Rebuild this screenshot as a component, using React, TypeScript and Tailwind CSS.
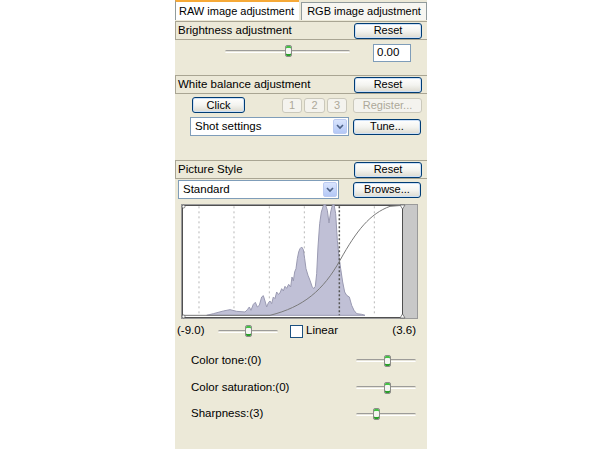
import React from "react";

const font = { fontFamily: '"Liberation Sans", Arial, sans-serif' };

function XpButton({ label, w = 68, disabled = false }: { label: string; w?: number; disabled?: boolean }) {
  if (disabled) {
    return (
      <div
        className="h-[15px] rounded-[3px] border border-[#cac8bb] bg-[#f4f3ee] text-[11px] leading-none text-[#aca899] flex items-center justify-center"
        style={{ width: w }}
      >
        {label}
      </div>
    );
  }
  return (
    <div
      className="h-[16px] rounded-[3px] border border-[#003c74] bg-linear-to-b from-white via-[#f4f4f0] to-[#dcdad0] shadow-[inset_0_0_0_1px_#cde0f7] text-[11px] leading-none text-black flex items-center justify-center"
      style={{ width: w }}
    >
      {label}
    </div>
  );
}

function Header({ title }: { title: string }) {
  return (
    <div className="h-[19px] flex items-center justify-between border-y border-l border-[#a9a593] pl-[2px] pr-[5px]">
      <span className="text-[11.5px] text-black whitespace-nowrap">{title}</span>
      <XpButton label="Reset" />
    </div>
  );
}

function Slider({ width, thumb }: { width: number; thumb: number }) {
  return (
    <div className="relative h-[14px] flex items-center" style={{ width }}>
      <div className="w-full h-[3px] rounded-full border-t border-[#9d9c99] border-b border-b-white bg-[#e6e4da]" />
      <div
        className="absolute top-[1px] w-[7px] h-[12px] rounded-[2px] border border-[#8c8c88] bg-[#f5f5f2] shadow-[inset_0_2px_0_#45c245,inset_0_-2px_0_#2b9f2b]"
        style={{ left: thumb - 3 }}
      />
    </div>
  );
}

function Select({ label, w }: { label: string; w: number }) {
  return (
    <div className="h-[19px] bg-white border border-[#7f9db9] flex items-center justify-between" style={{ width: w }}>
      <span className="pl-[4px] text-[11.5px] text-black whitespace-nowrap">{label}</span>
      <div className="w-[14px] h-[15px] mr-[1px] rounded-[2px] bg-linear-to-b from-[#dae5fd] to-[#b4c8f6] border border-[#bccbf1] flex items-center justify-center">
        <svg width="8" height="6" viewBox="0 0 8 6">
          <path d="M1 1 L4 4 L7 1" stroke="#4d6185" strokeWidth="1.6" fill="none" />
        </svg>
      </div>
    </div>
  );
}

function Graph() {
  const hist =
    "M110 355 L130 350 L160 342 L180 338 L200 343 L225 345 L232 338 L238 330 L243 340 L250 322 L256 316 L262 330 L268 325 L275 300 L280 296 L285 312 L290 330 L295 318 L300 312 L305 320 L310 300 L315 305 L320 285 L325 292 L330 288 L335 275 L340 282 L345 268 L350 274 L356 262 L362 270 L366 240 L370 252 L374 225 L378 215 L382 185 L386 165 L390 155 L395 150 L400 158 L404 185 L408 215 L414 235 L420 250 L426 268 L431 275 L436 268 L440 230 L444 150 L449 80 L454 45 L460 26 L466 22 L472 40 L477 78 L482 45 L487 25 L492 22 L497 50 L502 130 L507 180 L512 215 L518 255 L524 285 L530 295 L538 300 L545 325 L552 340 L560 350 L575 352 L585 355 Z";
  const grid = [87, 192, 298, 403, 613];
  return (
    <svg width="237" height="115" viewBox="0 0 237 115">
      <rect x="0.5" y="0.5" width="236" height="114" fill="#c8c8c8" stroke="#9a9a9a" />
      <rect x="1.5" y="1.5" width="220" height="112" fill="#ffffff" stroke="#505050" />
      <g transform="translate(-11 -7) scale(0.33333)">
        {grid.map((x) => (
          <line key={x} x1={x} y1="28" x2={x} y2="355" stroke="#b8b8b8" strokeDasharray="2 3" vectorEffect="non-scaling-stroke" />
        ))}
        <path d={hist} fill="#c0c0d6" stroke="#9a9ab2" vectorEffect="non-scaling-stroke" />
        <line x1="508" y1="28" x2="508" y2="355" stroke="#555" strokeWidth="1.5" strokeDasharray="2 2" vectorEffect="non-scaling-stroke" />
        <path
          d="M35 355 L300 355 C400 330 460 280 510 190 C560 100 600 50 660 28 L697 25"
          fill="none"
          stroke="#7a7a7a"
          vectorEffect="non-scaling-stroke"
        />
      </g>
      <path d="M219 1 L224 1 L221.5 5 Z" fill="#fff" stroke="#666" strokeWidth="0.8" />
      <path d="M219 114 L224 114 L221.5 110 Z" fill="#fff" stroke="#666" strokeWidth="0.8" />
      <circle cx="2.5" cy="2.5" r="1.5" fill="#fff" stroke="#666" strokeWidth="0.8" />
      <circle cx="2.5" cy="112.5" r="1.5" fill="#fff" stroke="#666" strokeWidth="0.8" />
    </svg>
  );
}

function ParamRow({ label, thumb, h }: { label: string; thumb: number; h: string }) {
  return (
    <div className={`${h} flex items-center justify-between pl-[16px] pr-[11px]`}>
      <span className="text-[11.5px] text-black">{label}</span>
      <Slider width={60} thumb={thumb} />
    </div>
  );
}

export default function App() {
  return (
    <div className="w-[600px] h-[449px] bg-white overflow-hidden" style={font}>
      <div className="ml-[175px] w-[252px] h-[449px] bg-[#ece9d8] flex flex-col">
        {/* tabs */}
        <div className="h-[20px] flex items-end gap-[2px]">
          <div className="w-[124px] h-[20px] bg-white border-t-2 border-[#f6a937] border-l border-l-[#919b9c] flex items-center pl-[3px] text-[11px] text-black whitespace-nowrap">
            RAW image adjustment
          </div>
          <div className="flex-1 h-[18px] bg-[#f7f6f1] border-t border-x border-[#919b9c] flex items-center justify-center text-[11px] text-black whitespace-nowrap">
            RGB image adjustment
          </div>
        </div>
        <div className="h-[1px]" />

        <Header title="Brightness adjustment" />
        <div className="h-[35px] flex items-start">
          <div className="ml-[50px] mt-[4px]">
            <Slider width={125} thumb={63} />
          </div>
          <div className="ml-[23px] mt-[4px] w-[38px] h-[18px] bg-white border border-[#7f9db9] flex items-center pl-[3px] text-[11.5px] text-black">
            0.00
          </div>
        </div>

        <Header title="White balance adjustment" />
        <div className="mt-[3px] h-[16px] flex items-center">
          <div className="ml-[17px]">
            <XpButton label="Click" w={53} />
          </div>
          <div className="ml-[37px] flex gap-[2px]">
            <XpButton label="1" w={20} disabled />
            <XpButton label="2" w={21} disabled />
            <XpButton label="3" w={20} disabled />
          </div>
          <div className="ml-[6px]">
            <XpButton label="Register..." w={69} disabled />
          </div>
        </div>
        <div className="mt-[4px] h-[19px] flex items-center">
          <div className="ml-[15px]">
            <Select label="Shot settings" w={159} />
          </div>
          <div className="ml-[4px]">
            <XpButton label="Tune..." w={68} />
          </div>
        </div>

        <div className="h-[24px]" />
        <Header title="Picture Style" />
        <div className="mt-[1px] h-[19px] flex items-center">
          <div className="ml-[3px]">
            <Select label="Standard" w={161} />
          </div>
          <div className="ml-[14px]">
            <XpButton label="Browse..." w={68} />
          </div>
        </div>

        <div className="mt-[5px] ml-[6px]">
          <Graph />
        </div>

        <div className="mt-[4px] h-[16px] flex items-center text-[11.5px] text-black">
          <span className="ml-[2px] w-[41px]">(-9.0)</span>
          <Slider width={60} thumb={30} />
          <div className="ml-[12px] w-[13px] h-[13px] bg-white border border-[#1c5180]" />
          <span className="ml-[3px]">Linear</span>
          <span className="ml-auto mr-[11px]">(3.6)</span>
        </div>

        <div className="h-[8px]" />
        <ParamRow label="Color tone:(0)" thumb={31} h="h-[27px]" />
        <ParamRow label="Color saturation:(0)" thumb={31} h="h-[27px]" />
        <ParamRow label="Sharpness:(3)" thumb={20} h="h-[26px]" />
      </div>
    </div>
  );
}
